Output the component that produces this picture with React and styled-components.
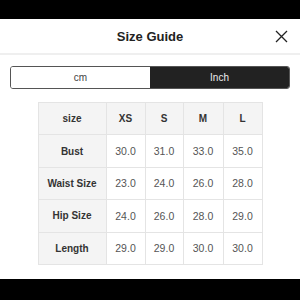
import React from "react";
import styled, { createGlobalStyle } from "styled-components";

const Global = createGlobalStyle`
  html, body { margin: 0; padding: 0; background: #000; }
  body { font-family: "Liberation Sans", Arial, sans-serif; }
`;

const Page = styled.div`
  width: 300px;
  height: 300px;
  display: flex;
  flex-direction: column;
  background: #000;
`;

const TopBar = styled.div`
  height: 19px;
  background: #000;
  flex-shrink: 0;
`;

const Panel = styled.div`
  background: #fff;
  display: flex;
  flex-direction: column;
  align-items: center;
  height: 260px;
`;

const Header = styled.div`
  width: 100%;
  height: 34px;
  display: grid;
  grid-template-columns: 1fr auto 1fr;
  align-items: center;
  border-bottom: 2px solid #efefef;
  box-sizing: content-box;
`;

const Title = styled.div`
  grid-column: 2;
  font-size: 13px;
  font-weight: 700;
  color: #222;
  padding-top: 1px;
`;

const Close = styled.div`
  grid-column: 3;
  justify-self: end;
  margin-right: 12px;
  width: 13px;
  height: 13px;
  display: flex;
  padding-top: 1px;
`;

const Toggle = styled.div`
  margin-top: 11px;
  width: 280px;
  height: 23px;
  box-sizing: border-box;
  border: 1px solid #555;
  border-radius: 3px;
  overflow: hidden;
  display: grid;
  grid-template-columns: 1fr 1fr;
`;

const Opt = styled.div`
  display: flex;
  align-items: center;
  justify-content: center;
  font-size: 10px;
  background: ${(p) => (p.$active ? "#222" : "#fff")};
  color: ${(p) => (p.$active ? "#eee" : "#444")};
`;

const Table = styled.table`
  margin-top: 13px;
  border-collapse: collapse;
  table-layout: fixed;
  width: 224px;
`;

const Cell = styled.td`
  height: 31.4px;
  padding: 0;
  border: 1px solid #e4e4e4;
  text-align: center;
  font-size: ${(p) => (p.$head ? "10px" : "10.5px")};
  font-weight: ${(p) => (p.$head ? 700 : 400)};
  color: ${(p) => (p.$head ? "#333" : "#555")};
  background: ${(p) => (p.$shade ? "#f4f4f4" : "#fff")};
`;

const sizes = ["XS", "S", "M", "L"];
const rows = [
  ["Bust", "30.0", "31.0", "33.0", "35.0"],
  ["Waist Size", "23.0", "24.0", "26.0", "28.0"],
  ["Hip Size", "24.0", "26.0", "28.0", "29.0"],
  ["Length", "29.0", "29.0", "30.0", "30.0"],
];

export default function App() {
  return (
    <>
      <Global />
      <Page>
        <TopBar />
        <Panel>
          <Header>
            <Title>Size Guide</Title>
            <Close>
              <svg width="13" height="13" viewBox="0 0 13 13">
                <path d="M1 1 L12 12 M12 1 L1 12" stroke="#222" strokeWidth="1.3" fill="none" />
              </svg>
            </Close>
          </Header>
          <Toggle>
            <Opt>cm</Opt>
            <Opt $active>Inch</Opt>
          </Toggle>
          <Table>
            <colgroup>
              <col style={{ width: "68px" }} />
              <col style={{ width: "39px" }} />
              <col style={{ width: "38px" }} />
              <col style={{ width: "40px" }} />
              <col style={{ width: "39px" }} />
            </colgroup>
            <tbody>
              <tr>
                <Cell $head $shade>size</Cell>
                {sizes.map((s) => (
                  <Cell key={s} $head $shade>{s}</Cell>
                ))}
              </tr>
              {rows.map((r) => (
                <tr key={r[0]}>
                  <Cell $head $shade>{r[0]}</Cell>
                  {r.slice(1).map((v, i) => (
                    <Cell key={i}>{v}</Cell>
                  ))}
                </tr>
              ))}
            </tbody>
          </Table>
        </Panel>
      </Page>
    </>
  );
}
